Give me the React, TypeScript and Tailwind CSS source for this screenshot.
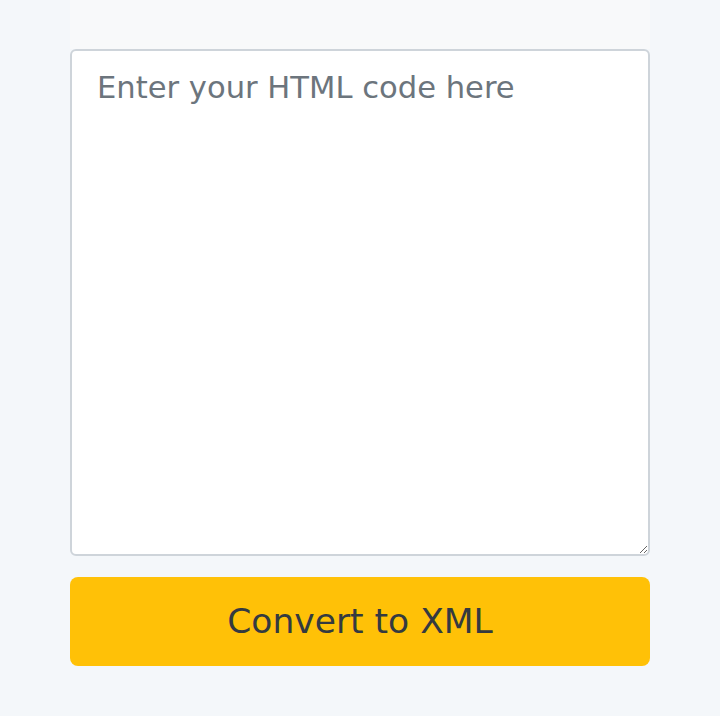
import React from "react";

export default function App() {
  return (
    <div className="min-h-[716px] w-full bg-[#f4f7fa] flex justify-center" style={{ fontFamily: '"DejaVu Sans", sans-serif' }}>
      <div className="w-[580px] flex flex-col">
        <div className="h-[49px] bg-[#f8f9fa]" />
        <textarea
          className="h-[507px] w-full rounded-[6px] border-2 border-[#ced4da] bg-white px-[25px] pt-[17px] text-[30.6px] leading-[1.3] text-[#343a40] placeholder:text-[#6c757d] outline-none"
          placeholder="Enter your HTML code here"
        />
        <button className="mt-[21px] h-[89px] w-full rounded-[8px] bg-[#ffc107] text-[34.5px] text-[#343a40]">
          Convert to XML
        </button>
      </div>
    </div>
  );
}
